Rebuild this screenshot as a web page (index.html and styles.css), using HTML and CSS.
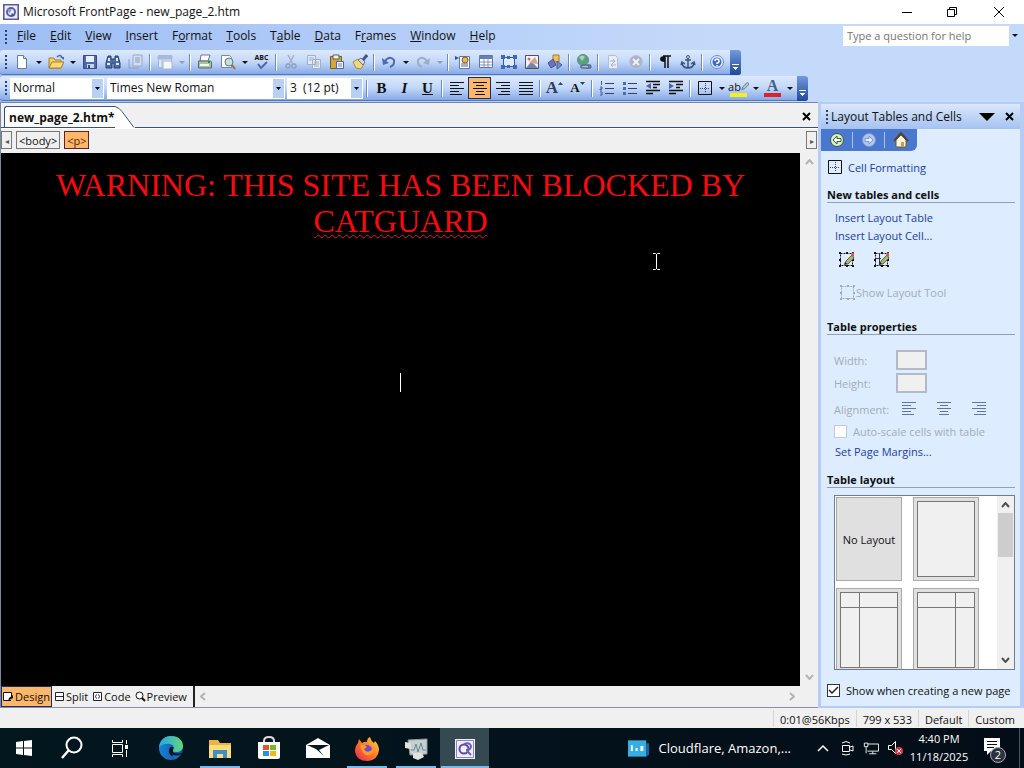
FILE: index.html
```
<!DOCTYPE html>
<html lang="en">

<head>
    <meta charset="UTF-8">
    <meta name="viewport" content="width=device-width, initial-scale=1.0">
    <title>Microsoft FrontPage - new_page_2.htm</title>
    <link rel="stylesheet" href="styles.css">
</head>

<body>
    <!-- shared shapes -->
    <svg class="defs" width="0" height="0" aria-hidden="true">
        <symbol id="left" viewBox="0 0 16 16"><path d="M1 2.5h14M1 5.5h9M1 8.5h14M1 11.5h9M1 14.5h12" stroke="currentColor" /></symbol>
        <symbol id="center" viewBox="0 0 16 16"><path d="M1 2.5h14M4 5.5h8M1 8.5h14M4 11.5h8M3 14.5h10" stroke="currentColor" /></symbol>
        <symbol id="right" viewBox="0 0 16 16"><path d="M1 2.5h14M6 5.5h9M1 8.5h14M6 11.5h9M3 14.5h12" stroke="currentColor" /></symbol>
        <symbol id="justify" viewBox="0 0 16 16"><path d="M1 2.5h14M1 5.5h14M1 8.5h14M1 11.5h14M1 14.5h14" stroke="currentColor" /></symbol>
        <symbol id="cells" viewBox="0 0 16 16"><path d="M1.500 1.500h13v13h-13z" fill="none" stroke="#111" /><path d="M8.500 3v10M3 8.500h10" stroke="#345" stroke-dasharray="1 1" /></symbol>
        <symbol id="handles" viewBox="0 0 18 18"><path d="M3.500 3.500h12v12h-12z" fill="none" stroke="currentColor" stroke-dasharray="2 1" /><path d="M2 2h2v2H2zM15 2h2v2h-2zM2 15h2v2H2zM15 15h2v2h-2zM9 2h2v2H9zM9 15h2v2H9zM2 9h2v2H2zM15 9h2v2h-2z" fill="currentColor" /></symbol>
        <symbol id="pencil" viewBox="0 0 18 18"><path d="M8 14l1-3 6-6 2 3-6 6z" fill="#aab776" stroke="#5c613c" /><path d="M14 5l2-3 1 1v4z" fill="#d35b4a" /><path d="M7 15l3-1-2-2z" fill="#222" /></symbol>
        <symbol id="app" viewBox="0 0 20 20"><path d="M1 1h18v18H1z" fill="#eeeefa" stroke="#5d5a9e" stroke-width="2" /><circle cx="10" cy="10" r="5" fill="none" stroke="#5b5ea9" stroke-width="2.500" /><path d="M5 6l6 1-3 5z" fill="#8d92cf" /><path d="M11 11l4 4-5 1z" fill="#4a4b91" /></symbol>
    </svg>

    <header class="titlebar">
        <svg class="app-icon" viewBox="0 0 20 20"><use href="#app" /></svg>
        <h1>Microsoft FrontPage - new_page_2.htm</h1>
        <button aria-label="Minimize"><svg width="12" height="12"><path d="M1 6.500h10" stroke="#000" /></svg></button>
        <button aria-label="Restore"><svg width="12" height="12"><path d="M1.500 3.500h7v7h-7zM3.500 3V1.500h7v7H9" fill="none" stroke="#000" /></svg></button>
        <button aria-label="Close"><svg width="12" height="12"><path d="M1 1l10 10M11 1L1 11" stroke="#000" /></svg></button>
    </header>

    <div class="bars">
        <nav class="menubar">
            <span class="grip"></span>
            <button><u>F</u>ile</button>
            <button><u>E</u>dit</button>
            <button><u>V</u>iew</button>
            <button><u>I</u>nsert</button>
            <button>F<u>o</u>rmat</button>
            <button><u>T</u>ools</button>
            <button>T<u>a</u>ble</button>
            <button><u>D</u>ata</button>
            <button>F<u>r</u>ames</button>
            <button><u>W</u>indow</button>
            <button><u>H</u>elp</button>
            <div class="question">
                <input type="text" aria-label="Type a question for help" placeholder="Type a question for help">
                <button class="drop" aria-label="Recent questions"></button>
            </div>
        </nav>

        <div class="toolbar">
            <span class="grip"></span>
            <button aria-label="New"><svg viewBox="0 0 16 16"><path d="M3.500 1.500h6l3 3v10h-9z" fill="#fff" stroke="#667ba5" /><path d="M9.500 1.500v3h3" fill="#cbd9f0" stroke="#667ba5" /></svg></button>
            <button class="drop" aria-label="New options"></button>
            <button aria-label="Open"><svg viewBox="0 0 16 16"><path d="M1 4h5l1 2h6v8H1z" fill="#f4cf66" stroke="#a57d28" /><path d="M1 14l3-6h12l-3 6z" fill="#ffd975" stroke="#a57d28" /><path d="M9 3q3-3 5 0" fill="none" stroke="#446bb3" stroke-width="1.500" /><path d="M12 3h4v3z" fill="#446bb3" /></svg></button>
            <button class="drop" aria-label="Open options"></button>
            <button aria-label="Save"><svg viewBox="0 0 16 16"><path d="M1.500 1.500h13v13h-13z" fill="#5067aa" stroke="#384a86" /><path d="M4 2h8v6H4z" fill="#e9effa" /><path d="M5 10h7v4H5z" fill="#cad4e8" /><path d="M6 11h2v3H6z" fill="#384a86" /></svg></button>
            <button aria-label="Find"><svg viewBox="0 0 16 16"><path d="M3 2h3v3h4V2h3l2 7v5H9V9H7v5H1V9z" fill="#4e6ca5" stroke="#293f75" /><path d="M2 10h3M11 10h3M4 4v3M12 4v3" stroke="#dce9fc" stroke-width="2" /></svg></button>
            <button aria-label="Publish"><svg viewBox="0 0 16 16"><path d="M5 1h9v11H5z" fill="#d5def0" stroke="#96a7c8" /><path d="M7 4h5M7 6h5M7 8h5M1 5v9h10" fill="none" stroke="#8b9dc2" /></svg></button>
            <span class="sep"></span>
            <button aria-label="Web panes"><svg viewBox="0 0 16 16"><path d="M1.500 1.500h13v12h-13z" fill="#dce6f6" stroke="#a3b3d0" /><path d="M1 2h14v3H1zM5 5v9" fill="#a9b9d8" stroke="#a9b9d8" /><path d="M6 7h9v8H6z" fill="#f3f6fb" stroke="#a7b5cc" /></svg></button>
            <button class="drop dim" aria-label="Pane options"></button>
            <span class="sep"></span>
            <button aria-label="Print"><svg viewBox="0 0 16 16"><path d="M4 1h9l-2 6H3z" fill="#fff" stroke="#687a91" /><path d="M1.500 7h12l1 1v6h-13z" fill="#adc0a8" stroke="#556d65" /><path d="M3 10h9v2H3z" fill="#f4f7ef" /><path d="M11 8h2" stroke="#278c39" stroke-width="2" /></svg></button>
            <button aria-label="Preview in browser"><svg viewBox="0 0 16 16"><path d="M1.500 1.500h8l2 2v10h-10z" fill="#fff" stroke="#7586a8" /><circle cx="9" cy="8" r="4" fill="#c2e1df" stroke="#66777d" /><path d="M12 11l3 4" stroke="#9a6d48" stroke-width="2" /></svg></button>
            <button class="drop" aria-label="Preview options"></button>
            <button aria-label="Spelling" class="spell"><span>ABC</span><svg viewBox="0 0 16 9"><path d="M4 3l3 4 6-6" fill="none" stroke="#486bae" stroke-width="2" /></svg></button>
            <span class="sep"></span>
            <button aria-label="Cut"><svg viewBox="0 0 16 16"><path d="M5 1l5 9M11 1L6 10" stroke="#a2afc8" stroke-width="1.500" /><circle cx="5" cy="12" r="2" fill="none" stroke="#91a0bd" stroke-width="1.500" /><circle cx="11" cy="12" r="2" fill="none" stroke="#91a0bd" stroke-width="1.500" /></svg></button>
            <button aria-label="Copy"><svg viewBox="0 0 16 16"><path d="M1.500 1.500h8v9h-8zM6.500 5.500h8v9h-8z" fill="#e1e9f7" stroke="#a1afca" /><path d="M3 4h5M3 6h3M8 8h5M8 10h5M8 12h5" stroke="#a1afca" /></svg></button>
            <button aria-label="Paste"><svg viewBox="0 0 16 16"><path d="M1.500 2.500h11v12h-11z" fill="#d0a745" stroke="#765d20" /><path d="M4 1h6v4H4z" fill="#edeee5" stroke="#645f52" /><path d="M7.500 7.500h7v7h-7z" fill="#eef4ff" stroke="#4a67a0" /><path d="M9 10h4M9 12h4" stroke="#7087b4" /></svg></button>
            <button aria-label="Format painter"><svg viewBox="0 0 16 16"><path d="M1 8l5-3 6 5-3 5-5-1z" fill="#f1d979" stroke="#aa8942" /><path d="M6 6l3-2 4 4-2 3z" fill="#d5d7dc" stroke="#68738a" /><path d="M11 6l4-5" stroke="#445a85" stroke-width="3" /></svg></button>
            <span class="sep"></span>
            <button aria-label="Undo"><svg viewBox="0 0 16 16"><path d="M4 7q5-6 9-1 1 5-4 7" fill="none" stroke="#4b6bb6" stroke-width="2" /><path d="M1 4l1 7 6-2z" fill="#4b6bb6" /></svg></button>
            <button class="drop" aria-label="Undo list"></button>
            <button aria-label="Redo"><svg viewBox="0 0 16 16"><path d="M12 7Q7 1 3 6q-1 5 4 7" fill="none" stroke="#9dadc9" stroke-width="2" /><path d="M15 4l-1 7-6-2z" fill="#9dadc9" /></svg></button>
            <button class="drop dim" aria-label="Redo list"></button>
            <span class="sep"></span>
            <button aria-label="Web component"><svg viewBox="0 0 16 16"><path d="M4.500 2.500h10v12h-10z" fill="#fff" stroke="#66799e" /><circle cx="10" cy="6" r="3" fill="#edbb4d" stroke="#765931" /><path d="M6 10h7M6 12h7" stroke="#52658e" /><path d="M0 2l4 2-4 2z" fill="#2953a5" /></svg></button>
            <button aria-label="Insert table"><svg viewBox="0 0 16 16"><path d="M1.500 1.500h13v12h-13z" fill="#fff" stroke="#60769f" /><path d="M1 2h14v3H1z" fill="#6781b6" /><path d="M2 8h12M2 11h12M6 5v8M10 5v8" stroke="#8495b6" /></svg></button>
            <button aria-label="Insert layer"><svg viewBox="0 0 16 16"><path d="M2.500 3.500h11v9h-11z" fill="#dfeafd" stroke="#3158ad" /><path d="M0 1h4v4H0zM12 1h4v4h-4zM0 11h4v4H0zM12 11h4v4h-4zM6 2h3v3H6zM6 11h3v3H6z" fill="#3f68bb" /></svg></button>
            <button aria-label="Picture"><svg viewBox="0 0 16 16"><path d="M1.500 1.500h13v13h-13z" fill="#eef5ff" stroke="#4d5363" /><path d="M2 14l5-6 3 2 4 4z" fill="#7185ad" /><path d="M5 9l6-6 3 7z" fill="#d7a390" /><circle cx="5" cy="5" r="1.500" fill="#de6b44" /></svg></button>
            <button aria-label="Drawing"><svg viewBox="0 0 16 16"><path d="M6 1h6v7H6z" fill="#efbf5c" stroke="#aa7637" /><path d="M1 9l5-4 3 6-5 3z" fill="#6e71bc" stroke="#484f91" /><path d="M10 7l5 4-5 4z" fill="#7190cc" stroke="#485d8f" /></svg></button>
            <span class="sep"></span>
            <button aria-label="Hyperlink"><svg viewBox="0 0 16 16"><circle cx="7" cy="6" r="5.500" fill="#5ba27c" stroke="#5f8599" /><path d="M3 3q4-3 6 0l-3 4z" fill="#a6d2b7" /><path d="M7 11h3q3 0 3 2t-3 1H7q-3 0-2-2zM11 11h3q2 2 0 3h-2" fill="none" stroke="#5c6d88" stroke-width="1.500" /></svg></button>
            <span class="sep"></span>
            <button aria-label="Refresh"><svg viewBox="0 0 16 16"><path d="M3.500 1.500h7l2 2v11h-9z" fill="#e6edf7" stroke="#b3bfd2" /><path d="M5 7h5M8 5l2 2-2 2M11 11H6M8 9l-2 2 2 2" fill="none" stroke="#a6b4cc" /></svg></button>
            <button aria-label="Stop"><svg viewBox="0 0 16 16"><circle cx="8" cy="8" r="6.500" fill="#a9b4c6" stroke="#bcc6d6" /><path d="M5 5l6 6M11 5l-6 6" stroke="#eef3fa" stroke-width="2" /></svg></button>
            <span class="sep"></span>
            <button aria-label="Show all"><svg viewBox="0 0 16 16"><path d="M8 2v12M11 2v12M6 2h8" stroke="#111" stroke-width="1.500" /><path d="M8 2Q3 2 3 5t5 3z" fill="#111" /></svg></button>
            <button aria-label="Bookmark"><svg viewBox="0 0 16 16"><circle cx="8" cy="3" r="1.500" fill="none" stroke="#3d5479" /><path d="M8 5v9M5 6h6M2 9q1 5 6 5t6-5M1 11l1-3 3 2M15 11l-1-3-3 2" fill="none" stroke="#3d5479" stroke-width="1.500" /></svg></button>
            <span class="sep"></span>
            <button aria-label="Help"><svg viewBox="0 0 16 16"><circle cx="8" cy="8" r="6.500" fill="#e1ecff" stroke="#6b8cc8" /><circle cx="8" cy="8" r="4.500" fill="#3f6bbd" /><path d="M6 7q0-2 2-2t2 2-2 2v1M8 11v1" fill="none" stroke="#fff" stroke-width="1.500" /></svg></button>
            <button class="more" aria-label="Toolbar options"></button>
        </div>

        <div class="toolbar format">
            <span class="grip"></span>
            <select class="style-select" aria-label="Style"><option>Normal</option></select>
            <select class="font-select" aria-label="Font"><option>Times New Roman</option></select>
            <select class="size-select" aria-label="Font size"><option>3&nbsp; (12 pt)</option></select>
            <span class="sep"></span>
            <button class="letter"><b>B</b></button>
            <button class="letter"><i>I</i></button>
            <button class="letter"><u>U</u></button>
            <span class="sep"></span>
            <button aria-label="Align left"><svg><use href="#left" /></svg></button>
            <button class="pressed" aria-label="Center"><svg><use href="#center" /></svg></button>
            <button aria-label="Align right"><svg><use href="#right" /></svg></button>
            <button aria-label="Justify"><svg><use href="#justify" /></svg></button>
            <span class="sep"></span>
            <button class="letter grow" aria-label="Increase font size">A<svg viewBox="0 0 5 3"><path d="M0 3h5L2.500 0z" fill="#345" /></svg></button>
            <button class="letter shrink" aria-label="Decrease font size">A<svg viewBox="0 0 5 3"><path d="M0 0h5L2.500 3z" fill="#345" /></svg></button>
            <span class="sep"></span>
            <button aria-label="Numbering"><svg viewBox="0 0 16 16"><path d="M6 3.500h9M6 8.500h9M6 13.500h9" stroke="#33425f" /><path d="M2.500 1v4M1 7h2v2H1v1h2M1 12h2v3H1" fill="none" stroke="#365a9d" /></svg></button>
            <button aria-label="Bullets"><svg viewBox="0 0 16 16"><path d="M6 3.500h9M6 8.500h9M6 13.500h9" stroke="#33425f" /><path d="M1 2h3v3H1zM1 7h3v3H1zM1 12h3v3H1z" fill="#4c6da8" /></svg></button>
            <button aria-label="Decrease indent"><svg viewBox="0 0 16 16"><path d="M1 1.500h14M8 4.500h7M8 7.500h4M1 10.500h14M1 13.500h7" stroke="#111" stroke-width="1.500" /><path d="M6 3v6L1 6z" fill="#4667a8" /></svg></button>
            <button aria-label="Increase indent"><svg viewBox="0 0 16 16"><path d="M1 1.500h14M8 4.500h7M8 7.500h4M1 10.500h14M1 13.500h7" stroke="#111" stroke-width="1.500" /><path d="M1 3v6l5-3z" fill="#4667a8" /></svg></button>
            <span class="sep"></span>
            <button aria-label="Borders"><svg><use href="#cells" /></svg></button>
            <button class="drop" aria-label="Border options"></button>
            <button class="highlight" aria-label="Highlight">ab<svg viewBox="0 0 9 9"><path d="M1 8l1-3 5-5 2 2-5 5z" fill="#c1c8ce" stroke="#59667d" /></svg></button>
            <button class="drop" aria-label="Highlight colors"></button>
            <button class="font-color" aria-label="Font color">A</button>
            <button class="drop" aria-label="Font colors"></button>
            <button class="more" aria-label="Toolbar options"></button>
        </div>
    </div>

    <main class="workspace">
        <section class="editor">
            <div class="tabs">
                <button class="tab">new_page_2.htm*</button>
                <svg class="slope" viewBox="0 0 20 22"><path d="M0 0q4 1 7 5l13 16v1H0z" fill="#fff" /><path d="M0 .5q4 1 7 5l12 16" fill="none" stroke="#38507f" /></svg>
                <button class="close" aria-label="Close page"><svg width="9" height="9"><path d="M1 1l7 7M8 1L1 8" stroke="#000" stroke-width="2" /></svg></button>
            </div>
            <div class="crumbs">
                <button class="step" aria-label="Back">◂</button>
                <button>&lt;body&gt;</button>
                <button class="current">&lt;p&gt;</button>
                <button class="step last" aria-label="Forward">▸</button>
            </div>
            <div class="page-row">
                <article class="page">
                    <p class="warning">WARNING: THIS SITE HAS BEEN BLOCKED BY <span class="misspelled">CATGUARD</span></p>
                    <div class="caret"></div>
                    <svg class="pointer" viewBox="0 0 9 17"><path d="M1 .5h2.500l1 1 1-1H8M4.500 1v15M1 16.500h2.500l1-1 1 1H8" fill="none" stroke="#fff" /></svg>
                </article>
                <div class="scroll-v">
                    <svg width="9" height="6"><path d="M1 5l3.500-4L8 5" /></svg>
                    <svg width="9" height="6"><path d="M1 1l3.500 4L8 1" /></svg>
                </div>
            </div>
            <div class="views">
                <button class="on"><svg viewBox="0 0 11 11"><path d="M8 9.500H.5v-8h8v4" fill="#fff" stroke="#111" /><path d="M5 10l1-3 4-3v3z" fill="#111" /></svg>Design</button>
                <button><svg viewBox="0 0 11 11"><path d="M1.500 1.500h8v8h-8zM1.500 5.500h8" fill="#fff" stroke="#223" /></svg>Split</button>
                <button><svg viewBox="0 0 11 11"><path d="M1.500 1.500h8v8h-8z" fill="#fff" stroke="#223" /><path d="M4.500 3.500l-1 2 1 2M6.500 3.500l1 2-1 2" fill="none" stroke="#223" /></svg>Code</button>
                <button><svg viewBox="0 0 11 11"><circle cx="4.500" cy="4.500" r="3.500" fill="#fff" stroke="#111" /><path d="M7 7l3 3" stroke="#111" stroke-width="2" /></svg>Preview</button>
                <div class="scroll-h">
                    <svg width="6" height="9"><path d="M5 1L1 4.500 5 8" /></svg>
                    <svg width="6" height="9"><path d="M1 1l4 3.500L1 8" /></svg>
                </div>
            </div>
        </section>

        <aside class="pane">
            <div class="pane-title">
                <span class="grip"></span>
                <h2>Layout Tables and Cells</h2>
                <button aria-label="Other task panes"><svg width="16" height="8"><path d="M0 0h16L8 8z" /></svg></button>
                <button aria-label="Close pane"><svg width="9" height="9"><path d="M1 1l7 7M8 1L1 8" stroke="#000" stroke-width="2" /></svg></button>
            </div>
            <div class="pane-body">
                <div class="pane-nav">
                    <button aria-label="Back"><svg viewBox="0 0 16 16"><circle cx="8" cy="8" r="6.500" fill="#dceccb" stroke="#365f36" /><path d="M12 6.500H8V4L4 8l4 4V9.500h4z" fill="#fff" stroke="#2a6126" /></svg></button>
                    <button aria-label="Forward"><svg viewBox="0 0 16 16"><circle cx="8" cy="8" r="6.500" fill="#b2c6ee" stroke="#7896cf" /><path d="M4 6.500h4V4l4 4-4 4V9.500H4z" fill="#e7efff" stroke="#7896cf" /></svg></button>
                    <button aria-label="Home"><svg viewBox="0 0 16 16"><path d="M3 8v7h10V8L8 3z" fill="#fff5d6" stroke="#665b4a" /><path d="M1 9l7-8 7 8" fill="none" stroke="#594330" stroke-width="2" /><path d="M8 10h3v5H8z" fill="#d39b43" /></svg></button>
                </div>
                <a href="#" class="cell-link"><svg viewBox="0 0 16 16"><use href="#cells" /></svg>Cell Formatting</a>

                <h3>New tables and cells</h3>
                <div class="links">
                    <a href="#">Insert Layout Table</a>
                    <a href="#">Insert Layout Cell...</a>
                </div>
                <div class="draw">
                    <button aria-label="Draw layout table"><svg viewBox="0 0 18 18"><use href="#handles" /><use href="#pencil" /></svg></button>
                    <button aria-label="Draw layout cell"><svg viewBox="0 0 18 18"><use href="#handles" /><path d="M7.500 3v12M3 8.500h6" stroke="#334" /><use href="#pencil" /></svg></button>
                </div>
                <button class="show-tool" disabled><svg viewBox="0 0 18 18"><use href="#handles" /></svg>Show Layout Tool</button>

                <h3>Table properties</h3>
                <div class="props">
                    <label for="tbl-width">Width:</label><input type="text" id="tbl-width" disabled>
                    <label for="tbl-height">Height:</label><input type="text" id="tbl-height" disabled>
                    <span>Alignment:</span>
                    <div class="aligns">
                        <button disabled aria-label="Left"><svg><use href="#left" /></svg></button>
                        <button disabled aria-label="Center"><svg><use href="#center" /></svg></button>
                        <button disabled aria-label="Right"><svg><use href="#right" /></svg></button>
                    </div>
                </div>
                <label class="check dim"><input type="checkbox" disabled>Auto-scale cells with table</label>
                <a href="#" class="margins">Set Page Margins...</a>

                <h3>Table layout</h3>
                <div class="gallery">
                    <div class="thumbs">
                        <button class="none">No Layout</button>
                        <button aria-label="Single cell"><span class="thumb"></span></button>
                        <button aria-label="Header and left column"><span class="thumb split-left"><i></i><i></i><i></i><i></i></span></button>
                        <button aria-label="Header and right column"><span class="thumb split-right"><i></i><i></i><i></i><i></i></span></button>
                    </div>
                    <div class="scroll-v dark">
                        <svg width="9" height="6"><path d="M1 5l3.500-4L8 5" /></svg>
                        <span class="knob"></span>
                        <svg width="9" height="6"><path d="M1 1l3.500 4L8 1" /></svg>
                    </div>
                </div>
                <label class="check show"><input type="checkbox" checked>Show when creating a new page</label>
            </div>
        </aside>
    </main>

    <div class="status">
        <span>0:01@56Kbps</span>
        <span>799 x 533</span>
        <span>Default</span>
        <span>Custom</span>
    </div>

    <footer class="taskbar">
        <button aria-label="Start"><svg viewBox="0 0 24 24"><path d="M4 6l7-1v6.500H4zM12 5l8-1v7.500h-8zM4 12.500h7V19l-7-1zM12 12.500h8V20l-8-1z" fill="#fff" /></svg></button>
        <button aria-label="Search"><svg viewBox="0 0 24 24"><circle cx="14" cy="9" r="7.500" fill="none" stroke="#fff" stroke-width="2" /><path d="M8.500 14.500L2 22" stroke="#fff" stroke-width="2.500" /></svg></button>
        <button aria-label="Task view"><svg viewBox="0 0 24 24"><path d="M4.500 8.500h10v8h-10zM4.500 4v2.500h10V4M4.500 21v-2.500h10V21M18.500 4v4M18.500 14v7" fill="none" stroke="#fff" /><path d="M17 9h3v4h-3z" fill="#fff" /></svg></button>
        <div class="apps">
            <button aria-label="Edge"><svg viewBox="0 0 24 24">
                <defs>
                    <linearGradient id="edge-top" x1="0" x2="1"><stop stop-color="#25a7e6" /><stop offset="1" stop-color="#61d67a" /></linearGradient>
                    <linearGradient id="edge-low" x1="0" x2="1"><stop stop-color="#1883d5" /><stop offset="1" stop-color="#164d9e" /></linearGradient>
                </defs>
                <circle cx="12" cy="12" r="12" fill="url(#edge-low)" /><path d="M0 11C1 3 7 0 12 0c8 0 12 5 12 10 0 4-3 6-7 6-3 0-4-1-3-2 4-6-7-9-14-3z" fill="url(#edge-top)" /><path d="M14 14q-1 5 9 3-1 3-5 5-9-2-8-8 1-4 4-3 1 1 0 3z" fill="#03151f" /><path d="M13 18q4 3 9 0-3 5-7 5z" fill="#1b6ec1" /></svg></button>
            <button class="running" aria-label="File Explorer"><svg viewBox="0 0 24 24"><path d="M1 3h9l2 3h11v15H1z" fill="#e9b444" /><path d="M1 8h22v13H1z" fill="#ffdc78" /><path d="M5 13h14v8h-4v-4H9v4H5z" fill="#3c8ecc" /></svg></button>
            <button aria-label="Store"><svg viewBox="0 0 24 24"><path d="M7 7V5q0-4 5-4t5 4v2" fill="none" stroke="#ddd" stroke-width="2" /><path d="M1 6h22v15q0 2-2 2H3q-2 0-2-2z" fill="#fff" /><path d="M6 9h6v5H6z" fill="#e3572f" /><path d="M13 9h6v5h-6z" fill="#78b829" /><path d="M6 15h6v5H6z" fill="#2595db" /><path d="M13 15h6v5h-6z" fill="#f5b51b" /></svg></button>
            <button aria-label="Mail"><svg viewBox="0 0 24 24"><path d="M0 9l12-7 12 7v13H0z" fill="#fff" /><path d="M1 9h22l-10 5 5 6-8-7z" fill="#07171f" /></svg></button>
            <button class="running" aria-label="Firefox"><svg viewBox="0 0 24 24">
                <defs><linearGradient id="fox" x1="1" y1="0" x2="0" y2="1"><stop stop-color="#ffdb38" /><stop offset=".5" stop-color="#ff7826" /><stop offset="1" stop-color="#e4225b" /></linearGradient></defs>
                <path d="M3 6l1-4 3 4q3-2 5-1 0-4 3-5 1 4 4 6l1-2q4 4 4 9-1 10-11 11Q1 24 0 14q0-5 3-8z" fill="url(#fox)" /><circle cx="12" cy="13" r="5" fill="#7349d1" /><path d="M5 8q5-1 7 2l-3 2q2 4 6 2 3-1 2-5 3 7-2 9-8 2-10-10z" fill="#ff9b24" /></svg></button>
            <button class="running" aria-label="Task Manager"><svg viewBox="0 0 24 24"><path d="M4 3l19-1v15l-17 1z" fill="#c6cfcf" stroke="#8b999b" /><path d="M7 13h3l2-6 2 8 3-9 2 7h3" fill="none" stroke="#648892" /><path d="M1 5l6 1v6l-6-1zM9 16h9l2 4-6 3-5-2z" fill="#e1e2dd" /></svg></button>
            <button class="running active" aria-label="FrontPage"><svg viewBox="0 0 20 20"><path d="M0 0h20v20H0z" fill="#f1effb" /><path d="M1.500 1.500h17v17h-17z" fill="none" stroke="#8b7fc0" /><circle cx="9" cy="10" r="4.500" fill="none" stroke="#5b4f9f" stroke-width="2" /><path d="M9 5q6-2 7 2 0 4-5 4M12 12l4 4" fill="none" stroke="#6a62b5" stroke-width="2" /></svg></button>
        </div>
        <button class="news"><svg viewBox="0 0 24 20"><path d="M20 5h3v12l-3 2z" fill="#1662ac" /><path d="M1 2h19v17H1z" fill="#36aee0" /><path d="M4 7h2v6H4zM9 10h2v3H9zM14 8h3v5h-3z" fill="#fff" /></svg>Cloudflare, Amazon,...</button>
        <div class="tray">
            <button aria-label="Show hidden icons"><svg viewBox="0 0 16 16"><path d="M3 11l5-5 5 5" fill="none" stroke="#fff" stroke-width="1.500" /></svg></button>
            <button aria-label="Meet now"><svg viewBox="0 0 16 16"><path d="M3.500 5.500h7v6h-7zM11 7l3-1v5l-3-1M3 3q4-3 8 0M3 14q4 2 8 0" fill="none" stroke="#fff" /></svg></button>
            <button aria-label="Network"><svg viewBox="0 0 18 16"><path d="M5.500 3.500h12v8H5M1.500 2.500h4v4h-4zM3.500 7v7M11 12v2.500M7 14.500h8" fill="none" stroke="#fff" /></svg></button>
            <button aria-label="Volume muted"><svg viewBox="0 0 16 16"><path d="M1.500 5.500h3l4-4v12l-4-4h-3z" fill="none" stroke="#fff" /><circle cx="12" cy="11" r="4" fill="#d43c42" /><path d="M10 9l4 4M14 9l-4 4" stroke="#fff" /></svg></button>
        </div>
        <button class="clock"><span>4:40 PM</span><span>11/18/2025</span></button>
        <button class="notes" aria-label="2 notifications"><svg viewBox="0 0 24 24"><path d="M1 2h16v13H8l-4 4v-4H1z" fill="#fff" /><path d="M4 5.500h10M4 8.500h10M4 11.500h7" stroke="#07111d" /></svg><span class="badge">2</span></button>
    </footer>
</body>

</html>
```
FILE: styles.css
```
* {
    box-sizing: border-box;
}

body {
    margin: 0;
    height: 100vh;
    display: flex;
    flex-direction: column;
    overflow: hidden;
    background: #f0f0f0;
    color: #111;
    font-family: "Open Sans", "Noto Sans", sans-serif;
    font-size: 11px;
}

h1, h2, h3, p {
    margin: 0;
    font-weight: normal;
}

button, input, select {
    margin: 0;
    padding: 0;
    border: none;
    background: none;
    color: inherit;
    font: inherit;
}

button {
    display: flex;
    align-items: center;
    justify-content: center;
}

svg {
    flex: none;
    display: block;
}

.defs {
    position: absolute;
}

/* title bar */
.titlebar {
    display: flex;
    height: 24px;
    background: #fff;
    align-items: center;
}

.titlebar h1 {
    flex: 1;
    font-size: 12px;
    padding-bottom: 1px;
}

.titlebar button {
    width: 45px;
    height: 22px;
}

.titlebar button:last-child {
    width: 50px;
}

.app-icon {
    width: 16px;
    height: 16px;
    margin: 0 4px 0 3px;
}

/* menu and toolbars */
.bars {
    background: linear-gradient(90deg, #9ebef5, #c4dafa 70%);
    height: 78px;
}

.menubar {
    display: flex;
    height: 25px;
    align-items: center;
    font-size: 12px;
}

.menubar button {
    padding: 0 7px 2px;
}

.grip {
    width: 10px;
    height: 16px;
    background: radial-gradient(circle, #27417f 1px, transparent 1px) 0 0 / 12px 4px;
}

.question {
    display: flex;
    margin: 0 4px 2px auto;
    width: 177px;
    height: 20px;
    background: #fff;
}

.question input {
    flex: 1;
    min-width: 0;
    padding-left: 4px;
    font-size: 11px;
}

.question input::placeholder {
    color: #767676;
}

.menubar .question .drop {
    width: 11px;
    padding: 0;
    background: #c4dafa;
}

.toolbar {
    display: flex;
    width: max-content;
    height: 25px;
    margin-top: 1px;
    align-items: center;
    background: linear-gradient(#dde9fd, #c2d7f8 50%, #86a9e6);
    border-radius: 3px;
    border-bottom: 1px solid #5576b5;
}

.toolbar button {
    width: 23px;
    height: 22px;
    flex: none;
}

.toolbar button svg {
    width: 16px;
    height: 16px;
}

.toolbar .drop {
    width: 11px;
}

.drop::before {
    content: "";
    border: 3px solid transparent;
    border-top-color: #111;
    border-bottom: none;
}

.drop.dim::before {
    border-top-color: #8d9dbb;
}

.sep {
    width: 6px;
    height: 17px;
    background: linear-gradient(90deg, transparent 2px, #6a8ccb 2px, #6a8ccb 3px, #fff 3px, #fff 4px, transparent 4px);
}

.toolbar .more {
    width: 11px;
    height: 25px;
    margin-left: 2px;
    align-items: flex-end;
    padding-bottom: 4px;
    background: linear-gradient(#7499dc, #21479b);
    border-radius: 0 3px 3px 0;
}

.more::before {
    content: "";
    width: 7px;
    height: 6px;
    border-top: 1px solid #fff;
    background: conic-gradient(from -45deg at 50% 100%, #fff 90deg, transparent 0) 0 2px / 7px 3px no-repeat;
}

.toolbar .spell {
    flex-direction: column;
    font-size: 7px;
    line-height: 6px;
    font-weight: bold;
}

.toolbar .spell svg {
    height: 9px;
}

.toolbar select {
    appearance: none;
    height: 21px;
    padding: 0 0 2px 2px;
    font-size: 12px;
    background: url("data:image/svg+xml,%3Csvg xmlns='http://www.w3.org/2000/svg' width='11' height='19'%3E%3Cpath d='M0 0h11v19H0z' fill='%23b9d0f5'/%3E%3Cpath d='M3 8h5l-2.500 3z'/%3E%3C/svg%3E") right no-repeat #fff;
    border: 1px solid #fff;
}

.style-select {
    width: 94px;
    margin-right: 3px;
}

.font-select {
    width: 178px;
    margin-right: 2px;
}

.size-select {
    width: 76px;
    margin-right: 1px;
}

.toolbar .letter {
    font: bold 15px "Liberation Serif", serif;
}

.toolbar .letter svg {
    width: 5px;
    height: 3px;
    margin-bottom: 10px;
}

.toolbar .grow {
    font-size: 17px;
    color: #2e3f5e;
}

.toolbar .shrink {
    font-size: 13px;
}

.toolbar .pressed {
    background: #fdb768;
    border: 1px solid #1d2c66;
}

.toolbar .highlight {
    height: 18px;
    border-bottom: 4px solid #f7f01a;
    width: 17px;
    margin: 0 3px;
}

.toolbar .highlight svg {
    width: 8px;
    height: 9px;
}

.toolbar .font-color {
    width: 17px;
    height: 18px;
    margin: 0 3px;
    border-bottom: 4px solid #dd2029;
    font: bold 16px "Liberation Serif", serif;
    color: #41608f;
}

/* editor */
.workspace {
    flex: 1;
    min-height: 0;
    display: flex;
    background: #c4dafa;
}

.editor {
    flex: 1;
    min-width: 0;
    display: flex;
    flex-direction: column;
    background: #f0f0f0;
    border-left: 1px solid #7c87a0;
    border-bottom: 1px solid #8f8da5;
    border-top: 1px solid #6e86b0;
}

.tabs {
    display: flex;
    height: 25px;
    align-items: flex-end;
    padding-left: 3px;
    border-bottom: 1px solid #38507f;
}

.tab {
    height: 21px;
    padding: 0 0 0 4px;
    background: #fff;
    border: solid #38507f;
    border-width: 1px 0 0 1px;
    border-radius: 3px 0 0 0;
    font-size: 12px;
    font-weight: bold;
}

.slope {
    width: 20px;
    height: 22px;
    margin-bottom: -1px;
}

.close {
    width: 20px;
    height: 22px;
    margin: 0 2px 0 auto;
}

.crumbs {
    display: flex;
    height: 25px;
    align-items: center;
    gap: 4px;
    padding-bottom: 2px;
    border-top: 1px solid #fff;
}

.crumbs button {
    height: 18px;
    padding: 0 2px;
    border: 1px solid #777;
}

.crumbs .current {
    background: #fdb768;
    border-color: #5c2430;
    color: #5c2410;
}

.crumbs .step {
    width: 11px;
    font-size: 8px;
    color: #555;
}

.crumbs .last {
    margin: 0 1px 0 auto;
}

.page-row {
    flex: 1;
    min-height: 0;
    display: flex;
}

.page {
    position: relative;
    flex: 1;
    min-width: 0;
    padding: 14px 8px;
    background: #000;
    overflow: hidden;
}

.warning {
    color: #f80a10;
    text-align: center;
    font: 32px/36px "Liberation Serif", "Times New Roman", serif;
}

.misspelled {
    text-decoration: underline wavy #d4202a 1px;
    text-underline-offset: 2px;
    text-decoration-skip-ink: none;
}

.caret {
    width: 1px;
    height: 19px;
    margin: 134px auto 0;
    background: #fff;
}

.pointer {
    position: absolute;
    left: 651px;
    top: 100px;
    width: 9px;
    height: 17px;
}

.scroll-v {
    display: flex;
    flex-direction: column;
    justify-content: space-between;
    align-items: center;
    width: 18px;
    padding: 6px 0;
    background: #f0f0f0;
}

.scroll-v path,
.scroll-h path {
    fill: none;
    stroke: #b4b4b4;
    stroke-width: 2;
}

.views {
    display: flex;
    height: 21px;
    align-items: stretch;
}

.views button {
    gap: 1px;
    padding: 0 1px;
    border: 1px solid transparent;
}

.views svg {
    width: 11px;
    height: 11px;
}

.views .on {
    background: #fdb768;
    border-color: #1d2c66;
}

.scroll-h {
    flex: 1;
    display: flex;
    justify-content: space-between;
    align-items: center;
    margin-left: 4px;
    padding: 0 23px 0 5px;
    border-left: 2px solid #222;
}

.scroll-h svg {
    width: 6px;
    height: 9px;
}

/* task pane */
.pane {
    width: 206px;
    display: flex;
    flex-direction: column;
    border: solid #b5cdf4;
    border-width: 2px 4px 2px 3px;
}

.pane-title {
    display: flex;
    flex: none;
    height: 25px;
    align-items: center;
    background: linear-gradient(#dbe8fc, #a5c2f0);
}

.pane-title h2 {
    flex: 1;
    font-size: 12px;
    padding-bottom: 1px;
    white-space: nowrap;
}

.pane-title button {
    width: 22px;
    height: 20px;
}

.pane-body {
    flex: 1;
    min-height: 0;
    display: flex;
    flex-direction: column;
    padding: 0 5px 0 6px;
    background: #ddecfe;
}

.pane-body > * {
    flex: none;
}

.pane-nav {
    display: flex;
    align-self: flex-start;
    height: 22px;
    margin-left: -6px;
    background: #4a78cf;
    border-radius: 0 0 6px 0;
}

.pane-nav button {
    width: 32px;
    border-right: 1px solid #a9c2ef;
    margin: 3px 0;
}

.pane-nav button:last-child {
    border: none;
}

.pane-nav svg {
    width: 16px;
    height: 16px;
}

.pane a {
    color: #1b3f9c;
    text-decoration: none;
}

.cell-link {
    display: flex;
    align-items: center;
    gap: 5px;
    height: 32px;
}

.cell-link svg {
    width: 16px;
    height: 16px;
}

.pane h3 {
    font-size: 11px;
    font-weight: bold;
    height: 17px;
    line-height: 15px;
    padding-top: 1px;
    margin-top: 3px;
    border-bottom: 1px solid #8da0bd;
}

.links {
    display: flex;
    flex-direction: column;
    padding: 6px 0 0 8px;
    line-height: 18px;
}

.draw {
    display: flex;
    gap: 17px;
    margin: 5px 0 0 10px;
}

.draw svg,
.show-tool svg {
    width: 18px;
    height: 18px;
}

.show-tool {
    align-self: flex-start;
    margin: 15px 0 14px 11px;
    color: #a3adba;
}

.props {
    display: grid;
    grid-template-columns: 62px 1fr;
    align-items: center;
    row-gap: 3px;
    padding: 15px 0 0 7px;
    color: #a3adba;
}

.props input {
    width: 31px;
    height: 20px;
    border: 2px solid #b3b9c6;
    background: #f0f0f0;
}

.aligns {
    display: flex;
    gap: 19px;
    padding: 4px 0 6px 5px;
    color: #5e77a0;
}

.aligns svg {
    width: 16px;
    height: 16px;
}

.check {
    display: flex;
    align-items: center;
    gap: 6px;
    height: 19px;
}

.check input {
    appearance: none;
    width: 13px;
    height: 13px;
    background: #fff;
    border: 1px solid #333;
}

.check input:checked {
    background: url("data:image/svg+xml,%3Csvg xmlns='http://www.w3.org/2000/svg' width='11' height='11'%3E%3Cpath d='M1 5l3 3 6-6' fill='none' stroke='%23222' stroke-width='1.500'/%3E%3C/svg%3E") center no-repeat #fff;
}

.check.dim {
    margin-left: 7px;
    color: #a3adba;
}

.check.dim input {
    border-color: #c6cbd3;
}

.margins {
    margin: 3px 0 9px 8px;
}

.pane-body .gallery {
    flex: 1 1 0;
    min-height: 0;
    display: flex;
    margin: 7px 0 0 7px;
    border: 1px solid #6f7c92;
    background: #fff;
    overflow: hidden;
}

.thumbs {
    flex: 1;
    display: grid;
    grid-template-columns: 66px 66px;
    grid-auto-rows: 84px;
    gap: 7px 11px;
    padding: 1px;
}

.thumbs button {
    padding: 3px;
    background: #e0e0e0;
    border: 1px solid #aaa;
}

.thumb {
    width: 100%;
    height: 100%;
    display: grid;
    gap: 1px;
    border: 1px solid #777;
    background: #f0f0f0;
}

.split-left {
    grid-template: 14px 1fr / 18px 1fr;
    background: #777;
}

.split-right {
    grid-template: 14px 1fr / 1fr 18px;
    background: #777;
}

.thumb i {
    background: #f0f0f0;
}

.dark {
    justify-content: flex-start;
    width: 17px;
}

.dark path {
    stroke: #505050;
}

.dark svg:last-child {
    margin-top: auto;
}

.knob {
    width: 15px;
    height: 44px;
    flex: none;
    margin-top: 5px;
    background: #cdcdcd;
}

.show {
    height: 36px;
    padding-top: 4px;
}

/* status line */
.status {
    display: flex;
    justify-content: flex-end;
    align-items: center;
    height: 20px;
    padding-right: 3px;
    background: #f0f0f0;
}

.status span {
    padding: 2px 6px 0;
    border-left: 1px solid #d4d4d4;
}

/* taskbar */
.taskbar {
    display: flex;
    height: 40px;
    background: linear-gradient(90deg, #03171f, #030d18);
    color: #fff;
}

.taskbar > button {
    width: 48px;
}

.taskbar svg {
    width: 24px;
    height: 24px;
}

.apps {
    display: flex;
    margin-left: 2px;
}

.apps button {
    width: 49px;
    border: solid transparent;
    border-width: 2px 0;
}

.apps .running {
    background: linear-gradient(#76b9ed, #76b9ed) bottom / 40px 2px no-repeat;
    border-bottom: none;
}

.apps .active {
    background: linear-gradient(#76b9ed, #76b9ed) bottom / 48px 2px no-repeat #344950;
}

.apps .active svg {
    width: 20px;
    height: 20px;
}

.taskbar .news {
    width: auto;
    gap: 9px;
    margin-left: auto;
    margin-right: 20px;
    font-size: 13px;
}

.news svg {
    width: 23px;
    height: 20px;
}

.tray {
    display: flex;
}

.tray button {
    width: 24px;
}

.tray svg {
    width: 16px;
    height: 16px;
}

.taskbar .clock {
    flex-direction: column;
    width: 64px;
    line-height: 18px;
}

.taskbar .notes {
    position: relative;
    width: 49px;
    margin-right: 4px;
    border-right: 1px solid #4b545c;
}

.badge {
    position: absolute;
    right: 13px;
    bottom: 5px;
    width: 16px;
    height: 16px;
    border: 1px solid #aab;
    border-radius: 50%;
    background: #2b333b;
    line-height: 14px;
}
```
